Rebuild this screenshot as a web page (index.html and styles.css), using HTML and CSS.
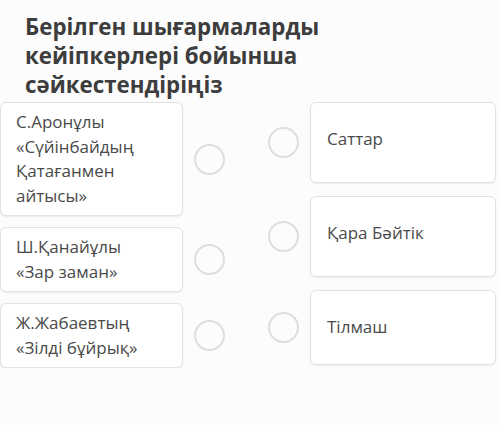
FILE: index.html
```html
<!DOCTYPE html>
<html lang="kk">
<head>
    <meta charset="UTF-8">
    <meta name="viewport" content="width=device-width, initial-scale=1.0">
    <title>Сәйкестендіру</title>
    <link rel="stylesheet" href="styles.css">
</head>
<body>
    <div class="quiz">
        <h1 class="quiz-title">Берілген шығармаларды кейіпкерлері бойынша сәйкестендіріңіз</h1>
        <div class="match">
            <div class="match-col match-col-left">
                <div class="pair">
                    <div class="card card-left">С.Аронұлы «Сүйінбайдың Қатағанмен айтысы»</div>
                    <span class="dot"></span>
                </div>
                <div class="pair">
                    <div class="card card-left">Ш.Қанайұлы «Зар заман»</div>
                    <span class="dot"></span>
                </div>
                <div class="pair">
                    <div class="card card-left">Ж.Жабаевтың «Зілді бұйрық»</div>
                    <span class="dot"></span>
                </div>
            </div>
            <div class="match-col">
                <div class="pair">
                    <span class="dot"></span>
                    <div class="card card-right">Саттар</div>
                </div>
                <div class="pair">
                    <span class="dot"></span>
                    <div class="card card-right">Қара Бәйтік</div>
                </div>
                <div class="pair">
                    <span class="dot"></span>
                    <div class="card card-right card-short">Тілмаш</div>
                </div>
            </div>
        </div>
    </div>
</body>
</html>
```

FILE: styles.css
```css
/* Global styles */
body {
    margin: 0;
    padding: 0;
    background: #fcfcfc;
    font-family: 'Open Sans', 'Noto Sans', sans-serif;
    color: #4a4a4a;
}

.quiz {
    padding-top: 12px;
}

/* Question title */
.quiz-title {
    margin: 0 0 3px;
    padding: 0 170px 0 25px;
    font-size: 22.3px;
    line-height: 29px;
    font-weight: bold;
    color: #3d3d3d;
}

/* Two columns of answers */
.match {
    display: grid;
    grid-template-columns: 225px 228px;
    column-gap: 43px;
    align-items: start;
}

.match-col {
    display: flex;
    flex-direction: column;
    gap: 13px;
}

.match-col-left {
    gap: 11px;
}

.pair {
    display: flex;
    align-items: center;
    gap: 11px;
}

.card {
    background: #fff;
    border: 1px solid #e2e2e2;
    border-radius: 6px;
    box-shadow: 0 1px 2px rgba(0, 0, 0, 0.07);
    font-size: 17px;
    line-height: 24.5px;
    box-sizing: border-box;
}

.card-left {
    width: 183px;
    padding: 7px 32px 7px 15px;
}

.card-right {
    flex: 1;
    height: 81px;
    padding: 0 16px 6px;
    display: flex;
    align-items: center;
}

.card-short {
    height: 75px;
    padding-bottom: 0;
}

/* Empty radio circles */
.dot {
    flex: none;
    width: 31px;
    height: 31px;
    border: 2px solid #dedede;
    border-radius: 50%;
    box-sizing: border-box;
}
```
